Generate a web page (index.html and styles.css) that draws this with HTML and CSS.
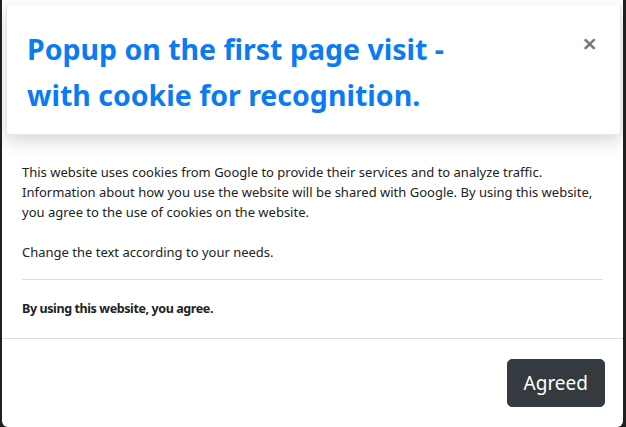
FILE: index.html
```html
<!DOCTYPE html>
<html lang="en">
<head>
<meta charset="utf-8">
<title>Cookie popup</title>
<link rel="stylesheet" href="styles.css">
</head>
<body>
<div class="modal">
  <div class="modal-header">
    <h2 class="modal-title">Popup on the first page visit -<br>with cookie for recognition.</h2>
    <button class="close" type="button" aria-label="Close">&times;</button>
  </div>
  <div class="modal-body">
    <p>This website uses cookies from Google to provide their services and to analyze traffic.<br>Information about how you use the website will be shared with Google. By using this website,<br>you agree to the use of cookies on the website.</p>
    <p>Change the text according to your needs.</p>
    <hr class="divider">
    <p class="agree"><strong>By using this website, you agree.</strong></p>
  </div>
  <div class="modal-footer">
    <button class="btn-agree" type="button">Agreed</button>
  </div>
</div>
</body>
</html>
```
FILE: styles.css
```css
html, body {
  margin: 0;
  height: 100%;
}
body {
  background: #202020;
  font-family: "Noto Sans", "Open Sans", sans-serif;
  color: #212529;
}
.modal {
  margin: 0 3px 0 2px;
  background: #fff;
  height: 427px;
  border-radius: 0 0 6px 6px;
  display: flex;
  flex-direction: column;
  overflow: hidden;
}
.modal-header {
  margin: 5px 2px 0 4px;
  padding: 21px 20px 16px 20px;
  display: flex;
  justify-content: space-between;
  align-items: flex-start;
  background: #fff;
  border: 1px solid #e4e6e8;
  border-top: none;
  box-shadow: 0 6px 16px rgba(0, 0, 0, 0.16);
}
.modal-title {
  margin: 0;
  font-size: 28.5px;
  line-height: 46px;
  font-weight: 700;
  color: #0b7bf4;
}
.close {
  border: 0;
  background: none;
  padding: 0;
  margin: 4px 3px 0 0;
  font-family: "Noto Sans", sans-serif;
  font-size: 26px;
  line-height: 26px;
  font-weight: 600;
  color: #777;
  cursor: pointer;
}
.modal-body {
  padding: 27px 20px 0 20px;
  font-size: 13px;
  line-height: 20px;
  color: #222;
}
.modal-body p {
  margin: 0 0 20px 0;
}
.modal-body p:nth-of-type(2) {
  margin-bottom: 17px;
}
.divider {
  margin: 0 0 19px 0;
  border: 0;
  border-top: 1px solid #dedede;
}
.modal-body .agree {
  margin-bottom: 19px;
  font-size: 12.5px;
  letter-spacing: -0.4px;
}
.modal-footer {
  border-top: 1px solid #dcdcdc;
  padding: 20px 18px;
  display: flex;
  justify-content: flex-end;
}
.btn-agree {
  font-family: "Noto Sans", sans-serif;
  font-size: 19px;
  line-height: 30px;
  padding: 8px 16px;
  border: 1px solid #343a40;
  border-radius: 5px;
  background: #343a40;
  color: #fff;
  cursor: pointer;
}
```
